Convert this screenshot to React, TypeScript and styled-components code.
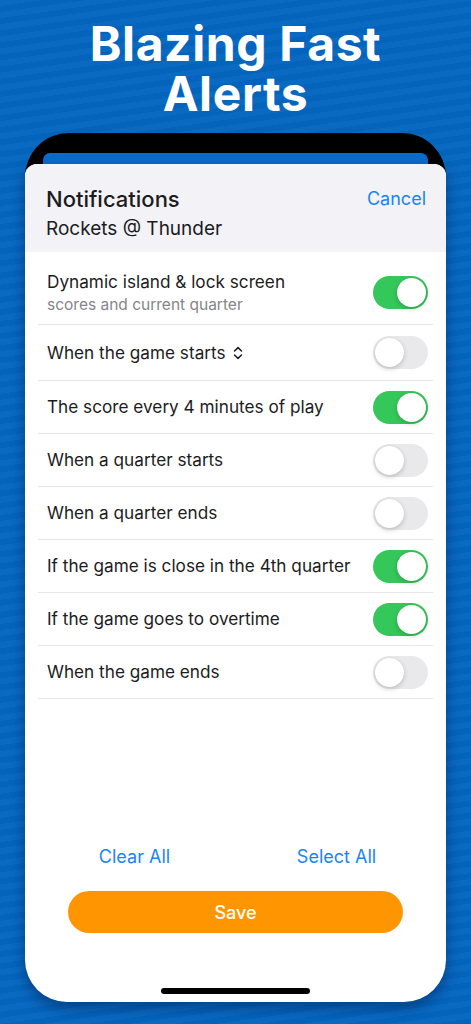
import { createGlobalStyle, styled } from 'styled-components';

const GlobalStyle = createGlobalStyle`
  html, body {
    margin: 0;
    padding: 0;
    background: #0466c0;
  }
  * {
    box-sizing: border-box;
  }
`;

type Alert = {
  label: string;
  sub?: string;
  on: boolean;
  picker?: boolean;
};

const alerts: Alert[] = [
  { label: 'Dynamic island & lock screen', sub: 'scores and current quarter', on: true },
  { label: 'When the game starts', on: false, picker: true },
  { label: 'The score every 4 minutes of play', on: true },
  { label: 'When a quarter starts', on: false },
  { label: 'When a quarter ends', on: false },
  { label: 'If the game is close in the 4th quarter', on: true },
  { label: 'If the game goes to overtime', on: true },
  { label: 'When the game ends', on: false },
];

function UpDownIcon() {
  return (
    <svg width="12" height="14" viewBox="0 0 12 14" fill="none">
      <path
        d="M2.5 5 L6 1.6 L9.5 5 M2.5 9 L6 12.4 L9.5 9"
        stroke="#1c1c1e"
        strokeWidth="1.5"
        strokeLinecap="round"
        strokeLinejoin="round"
      />
    </svg>
  );
}

export default function App() {
  return (
    <S.Page>
      <GlobalStyle />
      <S.Headline>
        <S.HeadlineLine>Blazing Fast</S.HeadlineLine>
        <S.HeadlineLine>Alerts</S.HeadlineLine>
      </S.Headline>
      <S.Phone>
        <S.ScreenStrip />
        <S.Sheet>
          <S.SheetHeader>
            <S.HeaderText>
              <S.Title>Notifications</S.Title>
              <S.Matchup>Rockets @ Thunder</S.Matchup>
            </S.HeaderText>
            <S.LinkButton $size={18}>Cancel</S.LinkButton>
          </S.SheetHeader>
          <S.List>
            {alerts.map((a) => (
              <S.Row key={a.label} $tall={!!a.sub} $picker={!!a.picker}>
                <S.RowText>
                  <S.Label>
                    {a.label}
                    {a.picker && <UpDownIcon />}
                  </S.Label>
                  {a.sub && <S.Sub>{a.sub}</S.Sub>}
                </S.RowText>
                <S.Toggle $on={a.on}>
                  <S.Knob />
                </S.Toggle>
              </S.Row>
            ))}
          </S.List>
          <S.Actions>
            <S.LinkButton $size={18}>Clear All</S.LinkButton>
            <S.LinkButton $size={18}>Select All</S.LinkButton>
          </S.Actions>
          <S.SaveButton>Save</S.SaveButton>
          <S.HomeBar />
        </S.Sheet>
      </S.Phone>
    </S.Page>
  );
}

const S = {
  Page: styled.div`
    width: 471px;
    height: 1024px;
    overflow: hidden;
    display: flex;
    flex-direction: column;
    align-items: center;
    font-family: Inter, 'Noto Sans', sans-serif;
    background-color: #0466c0;
    background-image: repeating-linear-gradient(
      172deg,
      rgba(255, 255, 255, 0.025) 0px,
      rgba(255, 255, 255, 0.025) 6px,
      rgba(0, 0, 0, 0.02) 6px,
      rgba(0, 0, 0, 0.02) 12px
    );
  `,
  Headline: styled.h1`
    margin: 19px 0 0;
    color: #ffffff;
    font-family: Inter, 'Noto Sans', sans-serif;
    font-size: 48px;
    font-weight: 700;
    letter-spacing: 0.6px;
    text-align: center;
    display: flex;
    flex-direction: column;
  `,
  HeadlineLine: styled.span`
    display: block;
    height: 50px;
    line-height: 50px;
  `,
  Phone: styled.div`
    margin-top: 14px;
    width: 421px;
    display: flex;
    flex-direction: column;
    border-radius: 44px 44px 0 0;
    background: linear-gradient(#000 0, #000 60px, transparent 60px);
  `,
  ScreenStrip: styled.div`
    margin: 20px 18px 0;
    height: 11px;
    background: #0b6bcc;
    border-radius: 7px 7px 0 0;
  `,
  Sheet: styled.div`
    height: 838px;
    display: flex;
    flex-direction: column;
    background: #ffffff;
    border-radius: 12px 12px 42px 42px;
    overflow: hidden;
    box-shadow: 0 6px 14px rgba(0, 20, 60, 0.45);
  `,
  SheetHeader: styled.div`
    height: 88px;
    padding: 22px 20px 0 21px;
    background: #f2f2f7;
    display: flex;
    justify-content: space-between;
    align-items: flex-start;
  `,
  HeaderText: styled.div`
    display: flex;
    flex-direction: column;
    gap: 4px;
  `,
  Title: styled.div`
    font-size: 22px;
    font-weight: 500;
    color: #1c1c1e;
    line-height: 27px;
  `,
  Matchup: styled.div`
    font-size: 19px;
    color: #1c1c1e;
    line-height: 24px;
  `,
  LinkButton: styled.span<{ $size: number }>`
    font-size: ${(p) => p.$size}px;
    color: #1a84f5;
    line-height: 26px;
    text-align: center;
  `,
  List: styled.div`
    flex: 1;
    margin: 0 13px;
    display: flex;
    flex-direction: column;
  `,
  Row: styled.div<{ $tall: boolean; $picker: boolean }>`
    height: ${(p) => (p.$tall ? 73 : p.$picker ? 56 : 53)}px;
    padding: ${(p) => (p.$tall ? '9px' : '0')} 5px 0 9px;
    display: flex;
    align-items: center;
    justify-content: space-between;
    border-bottom: 1px solid #e6e6ea;
  `,
  RowText: styled.div`
    display: flex;
    flex-direction: column;
    gap: 2px;
  `,
  Label: styled.div`
    display: flex;
    align-items: center;
    gap: 6px;
    font-size: 17.2px;
    color: #1c1c1e;
    line-height: 22px;
  `,
  Sub: styled.div`
    font-size: 15.5px;
    color: #85858b;
    line-height: 20px;
  `,
  Toggle: styled.div<{ $on: boolean }>`
    flex-shrink: 0;
    width: 55px;
    height: 33px;
    padding: 2px;
    border-radius: 17px;
    background: ${(p) => (p.$on ? '#34c759' : '#e9e9eb')};
    display: flex;
    justify-content: ${(p) => (p.$on ? 'flex-end' : 'flex-start')};
  `,
  Knob: styled.div`
    width: 29px;
    height: 29px;
    border-radius: 50%;
    background: #ffffff;
    box-shadow: 0 2px 5px rgba(0, 0, 0, 0.18), 0 0 1px rgba(0, 0, 0, 0.12);
  `,
  Actions: styled.div`
    display: grid;
    grid-template-columns: 202px 202px;
    justify-content: center;
    padding-bottom: 21px;
  `,
  SaveButton: styled.div`
    margin: 0 auto;
    width: 335px;
    height: 42px;
    border-radius: 21px;
    background: #ff9500;
    color: #ffffff;
    font-size: 18px;
    font-weight: 500;
    display: flex;
    align-items: center;
    justify-content: center;
  `,
  HomeBar: styled.div`
    margin: 55px auto 8px;
    width: 149px;
    height: 6px;
    border-radius: 3px;
    background: #000000;
  `,
};
